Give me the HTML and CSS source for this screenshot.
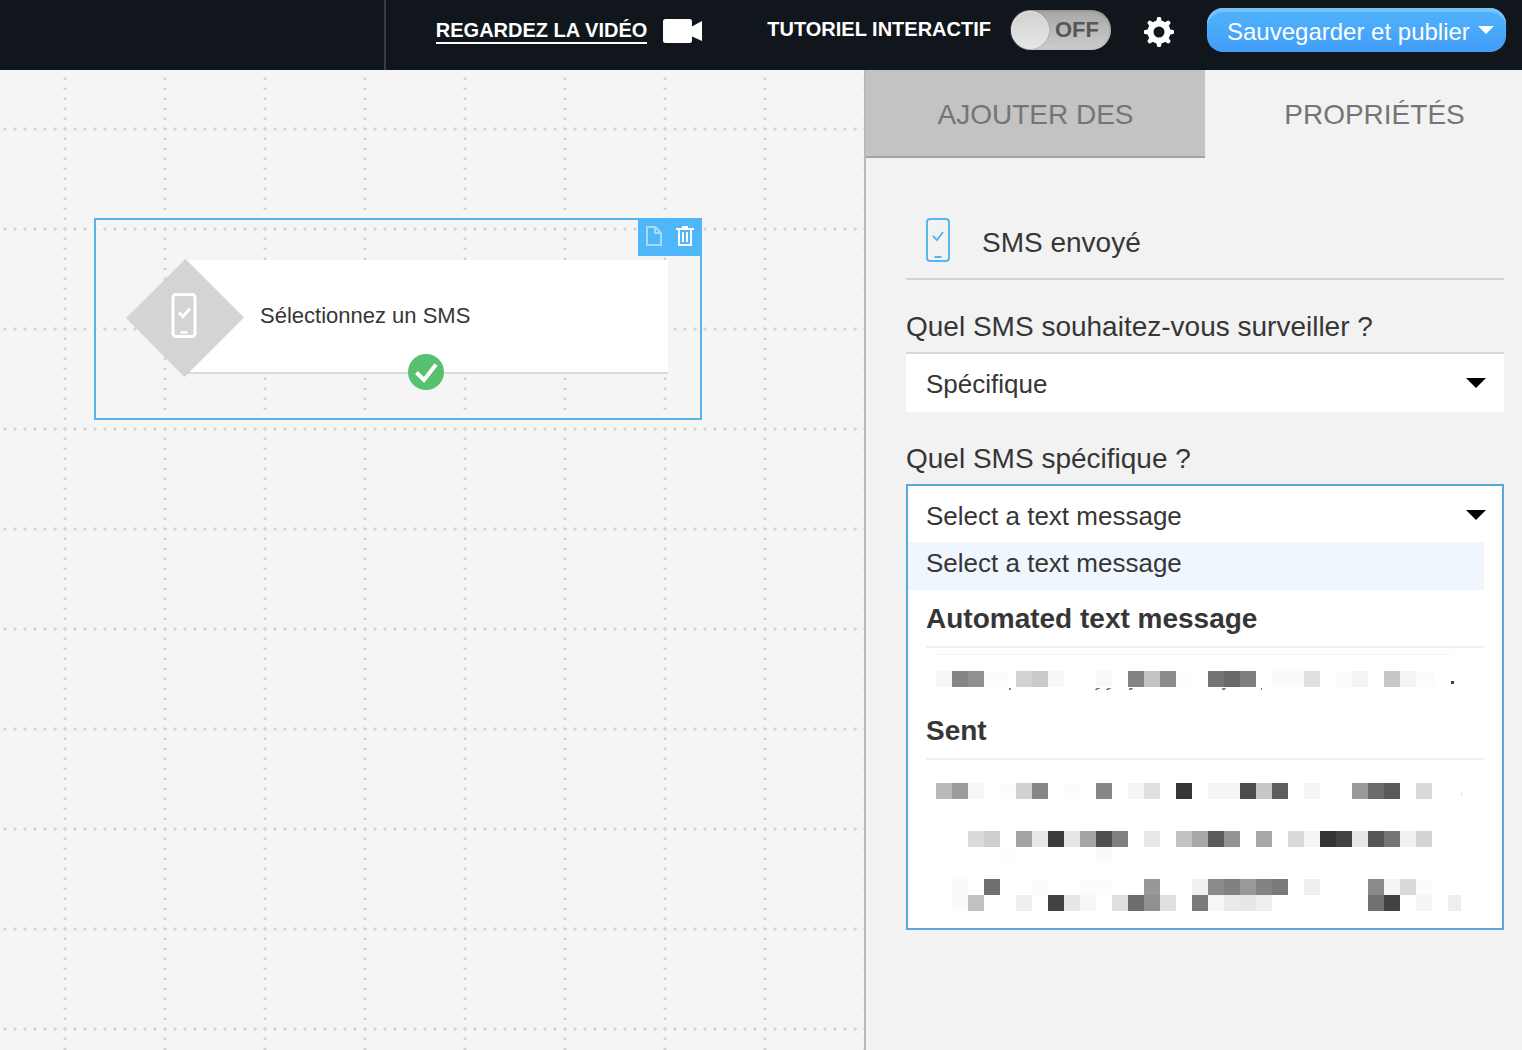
FILE: index.html
```html
<!DOCTYPE html>
<html lang="fr">
<head>
<meta charset="utf-8">
<meta name="viewport" content="width=device-width, initial-scale=1">
<title>SMS envoyé</title>
<link rel="stylesheet" href="styles.css">
</head>
<body>
<header class="topbar">
  <div class="topbar-start"></div>
  <div class="topbar-actions">
    <a class="video-link" href="#video">
      <span class="video-text">REGARDEZ LA VIDÉO</span>
      <svg width="39" height="24" viewBox="0 0 39 24" fill="#fff" aria-hidden="true"><rect width="29" height="24" rx="2.5"/><path d="M28 8 39 2v20L28 17z"/></svg>
    </a>
    <label class="tutorial">
      <span class="tutorial-text">TUTORIEL INTERACTIF</span>
      <span class="switch">
        <input class="switch-input" type="checkbox" role="switch">
        <span class="switch-knob"></span>
        <span class="switch-state">OFF</span>
      </span>
    </label>
    <button class="icon-button gear" type="button" aria-label="Paramètres">
      <svg width="30" height="30" viewBox="-15 -15 30 30" aria-hidden="true">
        <g fill="#fff">
          <path id="tooth" d="M-3-9-2-14Q-1.800-15-1-15H1Q1.800-15 2-14L3-9z"/>
          <use href="#tooth" transform="rotate(45)"/><use href="#tooth" transform="rotate(90)"/><use href="#tooth" transform="rotate(135)"/><use href="#tooth" transform="rotate(180)"/><use href="#tooth" transform="rotate(225)"/><use href="#tooth" transform="rotate(270)"/><use href="#tooth" transform="rotate(315)"/>
        </g>
        <circle r="8.500" fill="none" stroke="#fff" stroke-width="6"/>
      </svg>
    </button>
    <button class="publish" type="button">Sauvegarder et publier
      <svg class="publish-caret" width="16" height="8" viewBox="0 0 16 8" fill="#fff" aria-hidden="true"><path d="M0 0h16L8 8z"/></svg>
    </button>
  </div>
</header>

<div class="workspace">
  <main class="canvas">
    <div class="node">
      <div class="node-card"><span>Sélectionnez un SMS</span></div>
      <svg class="node-icon" width="118" height="118" viewBox="0 0 118 118" aria-hidden="true">
        <path d="M59.500 0 118 58.500 58.500 118 0 59z" fill="#d4d4d4"/>
        <g fill="none" stroke="#fff" stroke-width="3"><rect x="47" y="35.500" width="22" height="42" rx="3"/><path d="m53 53.500 4 4 7-8"/><path d="M54.500 73.500h7" stroke-width="2.500"/></g>
      </svg>
      <div class="node-tools">
        <button class="icon-button" type="button" aria-label="Dupliquer" disabled>
          <svg width="16" height="20" viewBox="0 0 16 20" fill="none" stroke="#fff" stroke-width="2" opacity=".5" aria-hidden="true"><path d="M1 1h8.500L15 7v12H1z"/><path d="M9 1v6h6"/></svg>
        </button>
        <button class="icon-button" type="button" aria-label="Supprimer">
          <svg width="18" height="20" viewBox="0 0 18 20" fill="none" stroke="#fff" stroke-width="2" aria-hidden="true"><path d="M0 3h18M6 1h6M3 3v16h12V3M7 6v10M11 6v10"/></svg>
        </button>
      </div>
      <svg class="node-check" width="36" height="36" viewBox="0 0 36 36" aria-hidden="true"><circle cx="18" cy="18" r="18" fill="#56c16f"/><path d="m8.500 18.500 7.500 7.500L28 10.500" fill="none" stroke="#fff" stroke-width="4"/></svg>
    </div>
  </main>

  <aside class="panel">
    <nav class="tabs">
      <button class="tab" type="button">AJOUTER DES</button>
      <button class="tab tab-active" type="button">PROPRIÉTÉS</button>
    </nav>
    <section class="properties">
      <h1 class="title">
        <svg width="24" height="44" viewBox="0 0 24 44" fill="none" stroke="#58b5ee" stroke-width="2" aria-hidden="true"><rect x="1" y="1" width="22" height="42" rx="3"/><path d="m7 18 4 4 6-8M8.500 39h7"/></svg>
        <span class="title-text">SMS envoyé</span>
      </h1>
      <div class="field">
        <label class="label" for="scope">Quel SMS souhaitez-vous surveiller ?</label>
        <div class="select-wrap">
          <select class="select" id="scope"><option>Spécifique</option></select>
          <svg class="caret" width="20" height="10" viewBox="0 0 20 10" aria-hidden="true"><path d="M0 0h20L10 10z"/></svg>
        </div>
      </div>
      <div class="field">
        <label class="label" for="message">Quel SMS spécifique ?</label>
        <div class="dropdown">
          <div class="select-wrap">
            <select class="select select-open" id="message"><option>Select a text message</option></select>
            <svg class="caret" width="20" height="10" viewBox="0 0 20 10" aria-hidden="true"><path d="M0 0h20L10 10z"/></svg>
          </div>
          <div class="options">
            <button class="option" type="button">Select a text message</button>
            <h2 class="group">Automated text message</h2>
            <svg class="masked" width="530" height="54" viewBox="0 0 530 54" shape-rendering="crispEdges" aria-hidden="true">
              <path d="M0 6h516v1H0z" fill="#f5f5f5"/>
              <g>
                <path d="M0 23h16v16H0z" fill="#f6f6f6"/><path d="M16 23h16v16H16z" fill="#858585"/><path d="M32 23h16v16H32z" fill="#919191"/><path d="M48 23h24v16H48z" fill="#fcfcfc"/>
                <path d="M80 23h16v16H80z" fill="#d2d2d2"/><path d="M96 23h16v16H96z" fill="#cacaca"/><path d="M112 23h16v16h-16z" fill="#f8f8f8"/><path d="M160 23h16v16h-16z" fill="#f9f9f9"/>
                <path d="M192 23h16v16h-16z" fill="#838383"/><path d="M208 23h16v16h-16z" fill="#c4c4c4"/><path d="M224 23h16v16h-16z" fill="#8b8b8b"/><path d="M240 23h16v16h-16z" fill="#fdfdfd"/>
                <path d="M272 23h16v16h-16z" fill="#747474"/><path d="M288 23h16v16h-16z" fill="#696969"/><path d="M304 23h16v16h-16z" fill="#7e7e7e"/><path d="M336 23h32v16h-32z" fill="#fafafa"/>
                <path d="M368 23h16v16h-16z" fill="#e0e0e0"/><path d="M400 23h16v16h-16z" fill="#fbfbfb"/><path d="M416 23h16v16h-16z" fill="#f4f4f4"/><path d="M448 23h16v16h-16z" fill="#c7c7c7"/><path d="M464 23h16v16h-16z" fill="#f4f4f4"/><path d="M480 23h18v16h-18z" fill="#fcfcfc"/>
                <path d="M73 40h2v2h-2zM160 40h4v1h-4zM171 40h4v1h-4zM159 41h3v1h-3zM170 41h3v1h-3zM193 40h4v1h-4zM193 41h3v1h-3zM286 40h4v1h-4zM286 41h3v1h-3zM325 40h1v2h-1z" fill="#858585"/>
                <path d="M515 33h3v3h-3z" fill="#444"/>
              </g>
            </svg>
            <h2 class="group">Sent</h2>
            <svg class="masked" width="530" height="168" viewBox="0 0 530 168" shape-rendering="crispEdges" aria-hidden="true">
              <g>
                <path d="M0 23h16v16H0z" fill="#b9b9b9"/><path d="M16 23h16v16H16z" fill="#9b9b9b"/><path d="M32 23h16v16H32z" fill="#f7f7f7"/><path d="M64 23h16v16H64z" fill="#fcfcfc"/><path d="M80 23h16v16H80z" fill="#d1d1d1"/><path d="M96 23h16v16H96z" fill="#868686"/><path d="M128 23h16v16h-16z" fill="#fcfcfc"/><path d="M160 23h16v16h-16z" fill="#878787"/><path d="M192 23h16v16h-16z" fill="#f5f5f5"/><path d="M208 23h16v16h-16z" fill="#e0e0e0"/><path d="M240 23h16v16h-16z" fill="#353535"/><path d="M272 23h32v16h-32z" fill="#f5f5f5"/><path d="M304 23h16v16h-16z" fill="#4d4d4d"/><path d="M320 23h16v16h-16z" fill="#c7c7c7"/><path d="M336 23h16v16h-16z" fill="#5e5e5e"/><path d="M368 23h16v16h-16z" fill="#f5f5f5"/><path d="M416 23h16v16h-16z" fill="#999"/><path d="M432 23h16v16h-16z" fill="#6b6b6b"/><path d="M448 23h16v16h-16z" fill="#595959"/><path d="M480 23h16v16h-16z" fill="#d9d9d9"/><path d="M525 33h1v3h-1z" fill="#ddd"/>
              </g>
              <g>
                <path d="M32 71h16v16H32z" fill="#dadada"/><path d="M48 71h16v16H48z" fill="#cecece"/><path d="M80 71h16v16H80z" fill="#a4a4a4"/><path d="M96 71h16v16H96z" fill="#e8e8e8"/><path d="M112 71h16v16h-16z" fill="#3c3c3c"/><path d="M128 71h16v16h-16z" fill="#e6e6e6"/><path d="M144 71h16v16h-16z" fill="#a5a5a5"/><path d="M160 71h16v16h-16z" fill="#505050"/><path d="M176 71h16v16h-16z" fill="#808080"/><path d="M208 71h16v16h-16z" fill="#e8e8e8"/><path d="M240 71h16v16h-16z" fill="#c2c2c2"/><path d="M256 71h16v16h-16z" fill="#a8a8a8"/><path d="M272 71h16v16h-16z" fill="#5b5b5b"/><path d="M288 71h16v16h-16z" fill="#939393"/><path d="M320 71h16v16h-16z" fill="#a8a8a8"/><path d="M352 71h16v16h-16z" fill="#d9d9d9"/><path d="M368 71h16v16h-16z" fill="#f5f5f5"/><path d="M384 71h16v16h-16z" fill="#333"/><path d="M400 71h16v16h-16z" fill="#434343"/><path d="M416 71h16v16h-16z" fill="#e7e7e7"/><path d="M432 71h16v16h-16z" fill="#565656"/><path d="M448 71h16v16h-16z" fill="#767676"/><path d="M464 71h16v16h-16z" fill="#f1f1f1"/><path d="M480 71h16v16h-16z" fill="#d3d3d3"/><path d="M64 87h16v16H64z" fill="#fdfdfd"/><path d="M160 87h16v16h-16z" fill="#fafafa"/>
              </g>
              <g>
                <path d="M16 119h16v32H16z" fill="#fafafa"/><path d="M48 119h16v16H48z" fill="#707070"/><path d="M96 119h16v16H96z" fill="#fbfbfb"/><path d="M144 119h32v16h-32z" fill="#fcfcfc"/><path d="M208 119h16v16h-16z" fill="#989898"/><path d="M256 119h16v16h-16z" fill="#f0f0f0"/><path d="M272 119h16v16h-16z" fill="#8a8a8a"/><path d="M288 119h16v16h-16z" fill="#818181"/><path d="M304 119h16v16h-16z" fill="#999"/><path d="M320 119h16v16h-16z" fill="#838383"/><path d="M336 119h16v16h-16z" fill="#797979"/><path d="M368 119h16v16h-16z" fill="#eee"/><path d="M432 119h16v16h-16z" fill="#8a8a8a"/><path d="M448 119h16v16h-16z" fill="#f5f5f5"/><path d="M464 119h16v16h-16z" fill="#d9d9d9"/><path d="M480 119h16v16h-16z" fill="#fbfbfb"/>
                <path d="M32 135h16v16H32z" fill="#c1c1c1"/><path d="M80 135h16v16H80z" fill="#eee"/><path d="M112 135h16v16h-16z" fill="#434343"/><path d="M128 135h16v16h-16z" fill="#e7e7e7"/><path d="M144 135h16v16h-16z" fill="#f7f7f7"/><path d="M176 135h16v16h-16z" fill="#dfdfdf"/><path d="M192 135h16v16h-16z" fill="#6d6d6d"/><path d="M208 135h16v16h-16z" fill="#909090"/><path d="M224 135h16v16h-16z" fill="#e0e0e0"/><path d="M256 135h16v16h-16z" fill="#797979"/><path d="M272 135h16v16h-16z" fill="#f6f6f6"/><path d="M288 135h16v16h-16z" fill="#eaeaea"/><path d="M304 135h16v16h-16z" fill="#e7e7e7"/><path d="M320 135h16v16h-16z" fill="#eee"/><path d="M432 135h16v16h-16z" fill="#717171"/><path d="M448 135h16v16h-16z" fill="#424242"/><path d="M480 135h16v16h-16z" fill="#f5f5f5"/><path d="M512 135h13v16h-13z" fill="#eee"/>
              </g>
            </svg>
          </div>
        </div>
      </div>
    </section>
  </aside>
</div>
</body>
</html>
```

FILE: styles.css
```css
* {
  box-sizing: border-box;
}

body {
  display: flex;
  flex-direction: column;
  min-height: 100vh;
  margin: 0;
  background: #f5f5f5;
  color: #363636;
  font-family: "Liberation Sans", Arial, sans-serif;
}

button,
select {
  margin: 0;
  padding: 0;
  border: 0;
  border-radius: 0;
  background: none;
  color: inherit;
  font: inherit;
}

svg {
  display: block;
  flex: none;
}

/* Top bar */

.topbar {
  display: flex;
  height: 70px;
  background: #11161c;
  color: #fff;
}

.topbar-start {
  flex: 0 1 386px;
  border-right: 2px solid #393d42;
}

.topbar-actions {
  display: flex;
  flex: 1 0 auto;
  align-items: center;
  justify-content: flex-end;
  gap: 33px;
  padding: 0 16px 10px 0;
  white-space: nowrap;
}

.video-link {
  display: flex;
  align-items: center;
  gap: 16px;
  margin-right: 32px;
  padding-top: 2px;
  color: #fff;
  font-size: 20px;
  font-weight: bold;
  line-height: 24px;
  text-decoration: none;
}

.video-text {
  border-bottom: 2px solid #fff;
}

.tutorial {
  display: flex;
  align-items: center;
  gap: 20px;
  font-size: 20px;
  font-weight: bold;
}

.tutorial-text {
  padding-bottom: 2px;
}

.switch {
  position: relative;
  display: flex;
  align-items: center;
  justify-content: space-between;
  width: 100px;
  height: 40px;
  padding-right: 12px;
  border-radius: 20px;
  background: linear-gradient(#a6a6a6, #cdcdcd);
  box-shadow: inset 0 1px 3px #8a8a8a;
  color: #575757;
  font-size: 22px;
}

.switch-input {
  position: absolute;
  inset: 0;
  width: 100%;
  height: 100%;
  margin: 0;
  opacity: 0;
}

.switch-knob {
  width: 38px;
  height: 38px;
  border: 1px solid #e9e9e9;
  border-radius: 50%;
  background: linear-gradient(#d2d2d2, #e6e6e6);
  box-shadow: 0 0 2px #999;
}

.icon-button {
  display: flex;
}

.gear {
  padding-top: 4px;
}

.publish {
  display: flex;
  justify-content: space-between;
  width: 299px;
  height: 44px;
  padding: 2px 12px 0 20px;
  border-radius: 16px;
  background: linear-gradient(#50b4fb, #429df8);
  box-shadow: inset 0 4px 1px #75c3fb;
  font-size: 24px;
  line-height: 44px;
}

.publish-caret {
  margin-top: 16px;
}

/* Canvas */

.workspace {
  display: flex;
  flex: 1;
}

.canvas {
  position: relative;
  flex: 1;
  overflow: hidden;
  background-color: #f5f5f5;
  background-image:
    radial-gradient(circle at 65px 9px, #d2d2d2 1px, transparent 2px),
    radial-gradient(circle at 5px 59px, #d2d2d2 1px, transparent 2px);
  background-size: 100px 10px, 10px 100px;
}

.node {
  position: absolute;
  top: 148px;
  left: 94px;
  width: 608px;
  padding: 40px 32px 44px 90px;
  border: 2px solid #58b3ea;
}

.node-card {
  display: flex;
  align-items: center;
  height: 114px;
  padding-left: 74px;
  border-bottom: 2px solid #dadada;
  background: #fff;
  font-size: 22px;
}

.node-icon {
  position: absolute;
  top: 39px;
  left: 30px;
}

.node-tools {
  position: absolute;
  top: -2px;
  right: -2px;
  display: flex;
  align-items: center;
  justify-content: space-between;
  width: 64px;
  height: 38px;
  padding: 0 8px 2px;
  background: #4eb6f9;
}

.node-check {
  position: absolute;
  top: 134px;
  left: 312px;
}

/* Side panel */

.panel {
  flex: 0 0 658px;
  border-left: 2px solid #b9b9b9;
  background: #f2f2f2;
}

.tabs {
  display: flex;
  height: 88px;
  color: #757575;
  font-size: 28px;
}

.tab {
  flex: 0 0 339px;
  padding-top: 4px;
  border-bottom: 2px solid #a3a3a3;
  background: #c3c3c3;
}

.tab-active {
  flex: 1;
  padding-left: 22px;
  border-bottom-color: transparent;
  background: none;
}

.properties {
  padding: 48px 18px 48px 40px;
}

.title {
  display: flex;
  align-items: center;
  gap: 32px;
  height: 74px;
  margin: 0 0 24px;
  padding: 0 20px 4px;
  border-bottom: 2px solid #d3d3d3;
  font-size: 28px;
  font-weight: normal;
}

.title-text {
  padding-top: 6px;
}

.field {
  margin-bottom: 24px;
}

.label {
  display: block;
  height: 48px;
  font-size: 28px;
  line-height: 46px;
}

.select-wrap {
  position: relative;
}

.select {
  display: block;
  width: 100%;
  height: 60px;
  padding: 2px 20px 0;
  border-top: 2px solid #d8d8d8;
  background: #fff;
  font-size: 26px;
  appearance: none;
}

.select-open {
  height: 56px;
  padding: 4px 18px 0;
  border-top: 0;
}

.caret {
  position: absolute;
  top: 26px;
  right: 18px;
  pointer-events: none;
}

.dropdown {
  border: 2px solid #58a8da;
  background: #fff;
}

.dropdown .caret {
  top: 24px;
  right: 16px;
}

.options {
  padding-right: 18px;
}

.option {
  display: block;
  width: 100%;
  height: 48px;
  padding: 0 18px 6px;
  background: #f0f6fe;
  font-size: 26px;
  text-align: left;
}

.group {
  height: 58px;
  margin: 0 0 0 18px;
  border-bottom: 2px solid #f0f0f0;
  font-size: 28px;
  line-height: 58px;
}

.masked {
  margin-left: 28px;
}
```
